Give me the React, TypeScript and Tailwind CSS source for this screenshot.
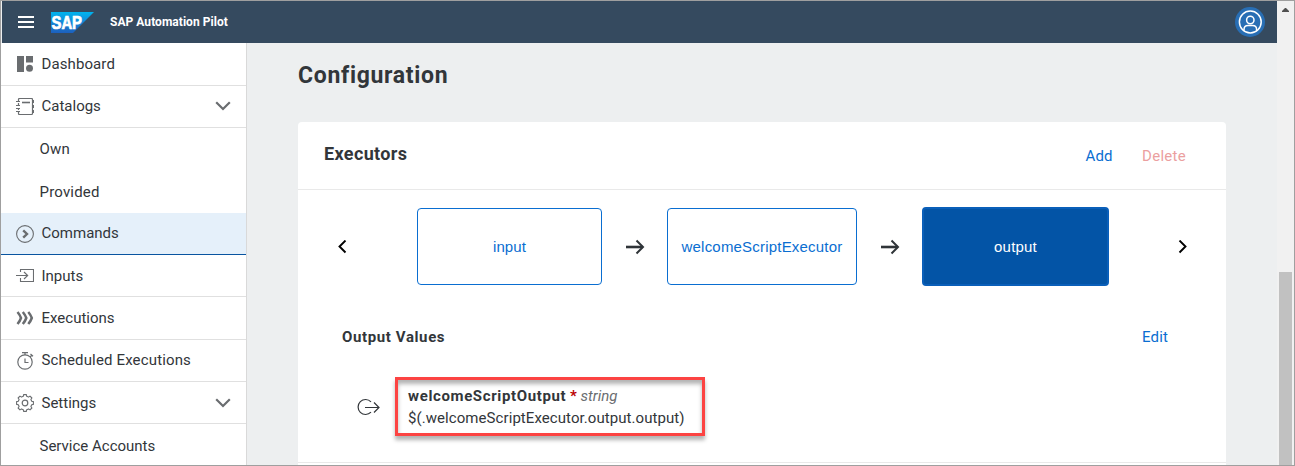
import type { ReactNode } from 'react';

function Icon({ children, className = '' }: { children: ReactNode; className?: string }) {
  return (
    <svg width="18" height="18" viewBox="0 0 18 18" fill="none" stroke="#6a6d70" strokeWidth="1" className={`shrink-0 ${className}`}>
      {children}
    </svg>
  );
}

const DashboardIcon = () => (
  <Icon>
    <g fill="#6a6d70" stroke="none">
      <rect x="1" y="1" width="7" height="16" />
      <rect x="10" y="1" width="7" height="6.5" />
      <circle cx="13.5" cy="13.3" r="3.5" />
    </g>
  </Icon>
);

const CatalogIcon = () => (
  <Icon>
    <path d="M2.5 3V1.5Q2.5 .5 3.5 .5H15.500Q16.500 .5 16.500 1.500V15.500Q16.500 16.500 15.500 16.500H3.500Q2.500 16.500 2.500 15.500V14M2.500 5V7M2.500 10V12" strokeWidth="1.200" />
    <path d="M0 3.500H4M0 7.500H4M0 10.500H4M0 13.500H4" />
    <path d="M6 4.500H14" strokeWidth="1.600" />
    <path d="M17.300 2V5M17.300 7V10M17.300 12V15" strokeWidth="1.400" />
  </Icon>
);

const CommandIcon = () => (
  <Icon>
    <circle cx="9" cy="9" r="8.400" strokeWidth="1.100" />
    <path d="M7.200 5.300L11 9L7.200 12.700" strokeWidth="2.400" />
  </Icon>
);

const InputIcon = () => (
  <Icon>
    <path d="M4.500 5V2.500H17.500V14.500H4.500V11" strokeWidth="1.100" />
    <path d="M0 8.500H11.500M8 5L11.700 8.500L8 12" strokeWidth="1.100" />
  </Icon>
);

const ExecutionIcon = () => (
  <Icon>
    <path d="M1.500 3Q4 6 5 9Q4 12 1.500 15M6.800 3Q9.300 6 10.300 9Q9.300 12 6.800 15M12.300 3Q14.800 6 15.800 9Q14.800 12 12.300 15" strokeWidth="2.500" />
  </Icon>
);

const TimerIcon = () => (
  <Icon>
    <circle cx="9" cy="10" r="7.200" strokeWidth="1.200" />
    <path d="M6 .6H12M9 .6V3M14 5L15.800 3.200M14.500 2L17 4.300M9 6.500V10.500H12.500" strokeWidth="1.200" />
  </Icon>
);

const GearIcon = () => (
  <Icon>
    <path
      d="M7.300 2.300L7.600 .6H10.400L10.700 2.300L12.500 3.100L14 2.100L15.900 4L14.900 5.500L15.700 7.300L17.400 7.600V10.400L15.700 10.700L14.900 12.500L15.900 14L14 15.900L12.500 14.900L10.700 15.700L10.400 17.400H7.600L7.300 15.700L5.500 14.900L4 15.900L2.100 14L3.100 12.500L2.300 10.700L.6 10.400V7.600L2.300 7.300L3.100 5.500L2.100 4L4 2.100L5.500 3.100Z"
      strokeLinejoin="round"
      strokeWidth="1.100"
    />
    <circle cx="9" cy="9" r="2.800" strokeWidth="1.200" />
  </Icon>
);

function Chevron() {
  return (
    <svg width="16" height="10" viewBox="0 0 16 10" fill="none" stroke="#6a6d70" strokeWidth="2.200" className="mb-px ml-auto mr-[15px]">
      <path d="M1.200 1.200L8 8L14.800 1.200" />
    </svg>
  );
}

function NavItem({ icon, label, open, className }: { icon: ReactNode; label: string; open?: boolean; className: string }) {
  return (
    <a className={`flex shrink-0 items-center border-b pl-[15px] ${className}`}>
      {icon}
      <span className="ml-[7.500px]">{label}</span>
      {open && <Chevron />}
    </a>
  );
}

function SapLogo() {
  return (
    <svg width="43" height="21" viewBox="0 0 43 21" className="ml-[17px]">
      <defs>
        <linearGradient id="sap" x1="0" y1="0" x2="0" y2="1">
          <stop offset="0" stopColor="#00b4ee" />
          <stop offset="0.500" stopColor="#1487d8" />
          <stop offset="1" stopColor="#1d60bd" />
        </linearGradient>
      </defs>
      <path d="M0 0H43L22 21H0Z" fill="url(#sap)" />
      <text x="0.500" y="16.800" textLength="30.500" lengthAdjust="spacingAndGlyphs" fill="#fff" stroke="#fff" strokeWidth="0.700" fontFamily="Liberation Sans, sans-serif" fontWeight="700" fontSize="17.500">SAP</text>
    </svg>
  );
}

function FlowArrow({ className }: { className: string }) {
  return (
    <svg width="20" height="16" viewBox="0 0 20 16" fill="none" stroke="#2f3438" className={`shrink-0 ${className}`}>
      <path d="M1 8H17.500" strokeWidth="2.600" />
      <path d="M11.500 1.500L18 8L11.500 14.500" strokeWidth="2" />
    </svg>
  );
}

export default function App() {
  return (
    <div className="flex h-[466px] w-[1295px] overflow-hidden border border-[#9f9f9f] bg-[#edeff0] font-['Roboto',sans-serif] text-[15px] text-[#32363a]">
      <div className="flex min-w-0 flex-1 flex-col">
        <header className="ml-px flex h-[42px] shrink-0 items-center bg-[#354a5f]">
          <svg width="16" height="12" viewBox="0 0 16 12" className="ml-[16px]" fill="#fff">
            <path d="M0 0H16V2H0ZM0 5H16V7H0ZM0 10H16V12H0Z" />
          </svg>
          <SapLogo />
          <h1 className="ml-[16px] text-[12px] font-bold tracking-[0.040px] text-white">SAP Automation Pilot</h1>
          <div className="ml-auto mr-[12px] flex size-[30px] items-center justify-center rounded-full bg-[#286eb4]">
            <svg width="24" height="24" viewBox="0 0 24 24" fill="none" stroke="#fff" strokeWidth="1.500">
              <circle cx="12.300" cy="12" r="10.900" />
              <circle cx="12.300" cy="10" r="3.700" />
              <path d="M6 20.500V19.500Q6 15.500 10 15.500H14.600Q18.600 15.500 18.600 19.500V20.500" />
            </svg>
          </div>
        </header>

        <div className="flex min-h-0 flex-1">
          <nav className="flex w-[246px] shrink-0 flex-col border-r border-[#d9d9d9] bg-white">
            <NavItem icon={<DashboardIcon />} label="Dashboard" className="h-[43px] border-[#e0e0e0] tracking-[0.100px]" />
            <NavItem icon={<CatalogIcon />} label="Catalogs" open className="h-[42px] border-[#e0e0e0]" />
            <a className="flex h-[43px] shrink-0 items-center pl-[38.500px] tracking-[0.200px]">Own</a>
            <a className="flex h-[42px] shrink-0 items-center pl-[38.500px] tracking-[0.180px]">Provided</a>
            <NavItem icon={<CommandIcon />} label="Commands" className="h-[42px] border-[#0854a0] bg-[#e5f0fa]" />
            <NavItem icon={<InputIcon />} label="Inputs" className="h-[42px] border-[#e0e0e0] pt-px" />
            <NavItem icon={<ExecutionIcon />} label="Executions" className="h-[43px] border-[#e0e0e0]" />
            <NavItem icon={<TimerIcon />} label="Scheduled Executions" className="h-[42px] border-[#e0e0e0] tracking-[0.150px]" />
            <NavItem icon={<GearIcon />} label="Settings" open className="h-[42px] border-[#e0e0e0] pt-px" />
            <a className="flex h-[43px] shrink-0 items-center pl-[38.500px] pt-[2px]">Service Accounts</a>
          </nav>

          <main className="min-w-0 flex-1 pl-[51px] pr-[51px]">
            <h2 className="mb-[32px] mt-[19px] text-[23px] font-bold leading-[28px] tracking-[0.690px]">Configuration</h2>
            <section className="flex h-[400px] flex-col rounded-t-[4px] bg-white">
              <div className="flex h-[68px] shrink-0 items-center border-b border-[#e9e9e9] pl-[26px] pr-[40px]">
                <h3 className="mb-[5px] text-[18px] font-bold tracking-[0.360px]">Executors</h3>
                <button className="ml-auto mr-[0.500px] pt-[2px] tracking-[0.100px] text-[#0a6ed1]">Add</button>
                <button className="ml-[29px] pt-[2px] tracking-[0.280px] text-[#eb9f9f]">Delete</button>
              </div>

              <div className="flex h-[113px] shrink-0 items-center font-['Liberation_Sans',Arial,sans-serif] text-[#0a6ed1]">
                <svg width="10" height="14" viewBox="0 0 10 14" fill="none" stroke="#000" strokeWidth="1.900" className="ml-[39px] shrink-0">
                  <path d="M8.500 .5L2.500 6.500L8.500 12.500" />
                </svg>
                <div className="ml-[70px] flex h-[77px] w-[185px] shrink-0 items-center justify-center rounded-[4px] border border-[#0a6ed1] pt-px tracking-[0.100px]">input</div>
                <FlowArrow className="ml-[23px] mt-px" />
                <div className="ml-[22px] flex h-[77px] w-[190px] shrink-0 items-center justify-center rounded-[4px] border border-[#0a6ed1] pt-px tracking-[0.200px]">welcomeScriptExecutor</div>
                <FlowArrow className="ml-[23px] mt-px" />
                <div className="ml-[22px] flex h-[79px] w-[187px] shrink-0 items-center justify-center rounded-[4px] border-2 border-[#0a5fb9] bg-[#0354a6] pt-px tracking-[0.200px] text-white">output</div>
                <svg width="10" height="14" viewBox="0 0 10 14" fill="none" stroke="#000" strokeWidth="1.900" className="ml-[69px] shrink-0">
                  <path d="M1.500 .5L7.500 6.500L1.500 12.500" />
                </svg>
              </div>

              <div className="flex h-[67px] shrink-0 items-center justify-between pl-[44px] pr-[58px] pt-px">
                <h4 className="font-bold tracking-[0.620px]">Output Values</h4>
                <button className="tracking-[0.150px] text-[#0a6ed1]">Edit</button>
              </div>

              <div className="flex h-[93px] shrink-0 border-b border-[#e9e9e9]">
                <svg width="24" height="18" viewBox="0 0 24 18" fill="none" stroke="#32363a" strokeWidth="1.200" className="ml-[58px] mt-[28px] shrink-0">
                  <path d="M15 3.800A7.500 7.500 0 1 0 15 14.200" />
                  <path d="M9 9.500H23M18 4.500L23 9.500L18 14.500" />
                </svg>
                <div className="ml-[15px] mt-[7px] h-[59px] w-[310px] border-[3px] border-[#fc4342] pl-[10px] pt-[5px] leading-[22px] shadow-[0px_4px_4px_rgba(0,0,0,0.3),inset_0px_4px_4px_rgba(0,0,0,0.3)]">
                  <div className="whitespace-nowrap">
                    <b className="tracking-[0.630px]">welcomeScriptOutput</b> <b className="text-[#bb0000]">*</b> <i className="text-[#6a6d70]">string</i>
                  </div>
                  <div className="whitespace-nowrap tracking-[0.070px]">$(.welcomeScriptExecutor.output.output)</div>
                </div>
              </div>
            </section>
          </main>
        </div>
      </div>

      <div className="flex w-[17px] shrink-0 flex-col items-center bg-[#f1f1f1]">
        <svg width="7" height="4" viewBox="0 0 7 4" className="mt-[7px] shrink-0" fill="#505050">
          <path d="M3 0H4L7 3V4H0V3Z" />
        </svg>
        <div className="mt-[260px] w-[13px] flex-1 bg-[#c1c1c1]" />
      </div>
    </div>
  );
}
